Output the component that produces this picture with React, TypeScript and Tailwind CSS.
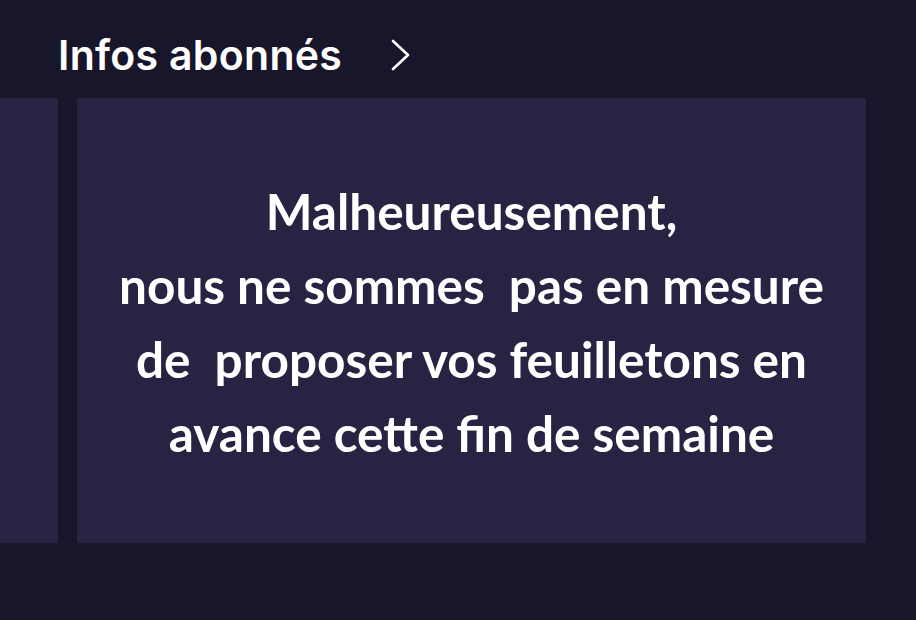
const messageLines = [
  'Malheureusement,',
  'nous ne sommes  pas en mesure',
  'de  proposer vos feuilletons en',
  'avance cette fin de semaine',
];

function Chevron() {
  return (
    <svg width="22" height="34" viewBox="0 0 22 34" fill="none" className="text-white">
      <path d="M3 3 L18 17 L3 31" stroke="currentColor" strokeWidth="2.6" strokeLinecap="round" strokeLinejoin="round" />
    </svg>
  );
}

function SectionHeader({ title }: { title: string }) {
  return (
    <div className="flex h-[98px] items-center gap-[48px] pl-[58px] pt-[12px]">
      <h2 className="text-[41px] font-semibold leading-none tracking-[0.3px] text-white [font-family:Inter,'Noto_Sans',sans-serif]">
        {title}
      </h2>
      <Chevron />
    </div>
  );
}

function NoticeCard({ lines }: { lines: string[] }) {
  return (
    <div className="flex h-[445px] w-[789px] shrink-0 flex-col items-center justify-center bg-[#262343] pt-[2px]">
      {lines.map((line) => (
        <p
          key={line}
          className="whitespace-pre text-center text-[49.5px] font-bold leading-[74px] text-white [font-family:Lato,'Noto_Sans',sans-serif]"
        >
          {line}
        </p>
      ))}
    </div>
  );
}

export default function App() {
  return (
    <main className="h-[620px] w-[916px] overflow-hidden bg-[#18162b]">
      <SectionHeader title="Infos abonnés" />
      <div className="flex gap-[19px]">
        <div className="h-[445px] w-[58px] shrink-0 bg-[#262343]" />
        <NoticeCard lines={messageLines} />
      </div>
    </main>
  );
}
